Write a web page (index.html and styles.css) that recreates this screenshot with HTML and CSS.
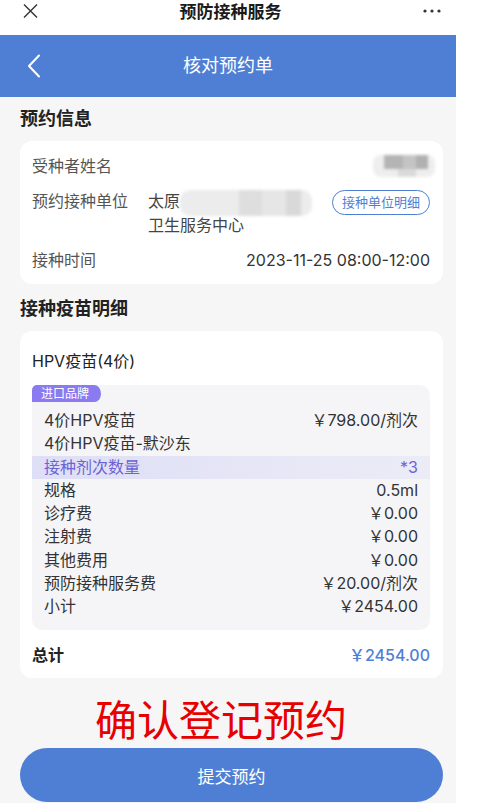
FILE: index.html
```html
<!DOCTYPE html>
<html lang="zh-CN">
    <head>
        <meta charset="utf-8">
        <title>核对预约单</title>
        <meta name="viewport" content="width=device-width,initial-scale=1">
        <link rel="stylesheet" href="styles.css">
    </head>
    <body>
        <div class="phone">
            <div class="topbar">
                <svg class="close-icon" width="15" height="14" viewBox="0 0 15 14">
                    <path d="M1 0.5 L14 13.5 M14 0.5 L1 13.5" stroke="#333" stroke-width="1.4" fill="none"/>
                </svg>
                <div class="topbar-title">预防接种服务</div>
                <svg class="more-icon" width="18" height="4" viewBox="0 0 18 4">
                    <circle cx="2" cy="2" r="1.6" fill="#333"/>
                    <circle cx="9" cy="2" r="1.6" fill="#333"/>
                    <circle cx="16" cy="2" r="1.6" fill="#333"/>
                </svg>
            </div>

            <div class="navbar">
                <svg class="back-icon" width="14" height="24" viewBox="0 0 14 24">
                    <path d="M12 1.5 L2 12 L12 22.5" stroke="#fff" stroke-width="2" fill="none" stroke-linecap="round" stroke-linejoin="round"/>
                </svg>
                <div class="nav-title">核对预约单</div>
                <div></div>
            </div>

            <main class="content">
                <h2 class="section-title">预约信息</h2>
                <div class="card info-card">
                    <div class="info-row">
                        <span class="label">受种者姓名</span>
                        <span class="masked-name"></span>
                    </div>
                    <div class="info-row">
                        <span class="label">预约接种单位</span>
                        <span class="unit-value">太原<span class="masked-unit"></span><br>卫生服务中心</span>
                        <span class="unit-btn">接种单位明细</span>
                    </div>
                    <div class="info-row">
                        <span class="label">接种时间</span>
                        <span class="value">2023-11-25 08:00-12:00</span>
                    </div>
                </div>

                <h2 class="section-title">接种疫苗明细</h2>
                <div class="card vaccine-card">
                    <div class="vaccine-name">HPV疫苗(4价)</div>
                    <div class="detail-box">
                        <span class="brand-tag">进口品牌</span>
                        <div class="detail-row"><span>4价HPV疫苗</span><span>￥798.00/剂次</span></div>
                        <div class="detail-row"><span>4价HPV疫苗-默沙东</span></div>
                        <div class="detail-row highlight"><span>接种剂次数量</span><span>*3</span></div>
                        <div class="detail-row"><span>规格</span><span>0.5ml</span></div>
                        <div class="detail-row"><span>诊疗费</span><span>￥0.00</span></div>
                        <div class="detail-row"><span>注射费</span><span>￥0.00</span></div>
                        <div class="detail-row"><span>其他费用</span><span>￥0.00</span></div>
                        <div class="detail-row"><span>预防接种服务费</span><span>￥20.00/剂次</span></div>
                        <div class="detail-row"><span>小计</span><span>￥2454.00</span></div>
                    </div>
                    <div class="total-row">
                        <span>总计</span>
                        <span class="total-amount">￥2454.00</span>
                    </div>
                </div>

                <div class="annotation">确认登记预约</div>
                <button class="submit-btn">提交预约</button>
            </main>
        </div>
    </body>
</html>
```

FILE: styles.css
```css
body {
    margin: 0;
    background-color: #fff;
    font-family: Inter, "Noto Sans CJK SC", sans-serif;
    color: #333;
}

.phone {
    width: 456px;
    min-height: 803px;
    display: flex;
    flex-direction: column;
}

.topbar {
    height: 35px;
    display: flex;
    justify-content: space-between;
    align-items: flex-start;
    padding: 0 15px 0 23px;
    background-color: #fff;
}
.close-icon {
    margin-top: 4px;
}
.topbar-title {
    font-size: 17px;
    font-weight: 700;
    line-height: 24px;
    color: #1a1a1a;
}
.more-icon {
    margin-top: 9px;
}

.navbar {
    height: 62px;
    display: grid;
    grid-template-columns: 1fr auto 1fr;
    align-items: center;
    background-color: #4f7fd4;
}
.back-icon {
    margin-left: 27px;
}
.nav-title {
    font-size: 18px;
    color: #fff;
    line-height: 24px;
}

.content {
    flex: 1;
    background-color: #f6f6f6;
    padding: 10px 13px 0 20px;
}

.section-title {
    margin: 0 0 10px;
    font-size: 18px;
    font-weight: 700;
    line-height: 24px;
    color: #222;
}
.card + .section-title {
    margin-top: 13px;
}

.card {
    background-color: #fff;
    border-radius: 12px;
}

.info-card {
    padding: 13px 13px 12px 12px;
    display: flex;
    flex-direction: column;
    gap: 11px;
}
.info-row {
    display: flex;
    align-items: flex-start;
    font-size: 16px;
    line-height: 24px;
}
.info-row .label {
    width: 116px;
    flex-shrink: 0;
    color: #555;
}
.info-row .value {
    margin-left: auto;
    color: #333;
}

.masked-name {
    width: 62px;
    height: 22px;
    margin: 1px -5px 0 auto;
    border-radius: 8px;
    background:
        linear-gradient(90deg, transparent 0 18%, #b4b4b4 18% 48%, #c4c4c4 48% 70%, #b0b0b0 70% 88%, transparent 88%) top / 100% 65% no-repeat,
        linear-gradient(90deg, transparent 0 40%, #dadada 40% 70%, transparent 70%) bottom / 100% 35% no-repeat,
        #eeeeee;
    filter: blur(1.5px);
}

.unit-value {
    flex: 1;
    color: #444;
}
.masked-unit {
    display: inline-block;
    width: 132px;
    height: 26px;
    margin: -3px 0;
    vertical-align: middle;
    border-radius: 10px;
    background:
        linear-gradient(90deg, #ececec 0 45%, #dedede 45% 62%, #e6e6e6 62% 80%, #d9d9d9 80% 92%, #ececec 92%);
    filter: blur(1.5px);
}
.unit-btn {
    margin-top: 1px;
    padding: 0 9px;
    border: 1px solid #4f7fd4;
    border-radius: 13px;
    font-size: 13px;
    line-height: 23px;
    color: #4f7fd4;
}

.vaccine-card {
    padding: 18px 13px 11px 12px;
}
.vaccine-name {
    font-size: 16px;
    line-height: 24px;
    color: #222;
}

.detail-box {
    margin-top: 12px;
    padding-bottom: 12px;
    background-color: #f5f5f7;
    border-radius: 10px;
}
.brand-tag {
    display: inline-block;
    height: 17px;
    padding: 0 12px 0 9px;
    margin-bottom: 7px;
    background-color: #8a7bf0;
    border-radius: 10px 14px 12px 0 / 10px 17px 17px 0;
    font-size: 12px;
    line-height: 17px;
    color: #fff;
    vertical-align: top;
}
.detail-row {
    display: flex;
    justify-content: space-between;
    padding: 0 12px;
    font-size: 16px;
    line-height: 23.25px;
    color: #333;
}
.detail-row.highlight {
    background: linear-gradient(90deg, #dedef6, #ececf7);
    color: #6c63d4;
}

.total-row {
    display: flex;
    justify-content: space-between;
    margin-top: 13px;
    font-size: 16px;
    font-weight: 700;
    line-height: 24px;
    color: #222;
}
.total-amount {
    color: #4f80d8;
    font-weight: 500;
}

.annotation {
    margin-top: 19px;
    padding-left: 75px;
    font-size: 42px;
    line-height: 48px;
    color: #e60000;
}

.submit-btn {
    display: block;
    width: 100%;
    height: 54px;
    margin-top: 3px;
    border: none;
    border-radius: 27px;
    background-color: #4f7fd4;
    font-family: inherit;
    font-size: 17px;
    color: #fff;
}
```
